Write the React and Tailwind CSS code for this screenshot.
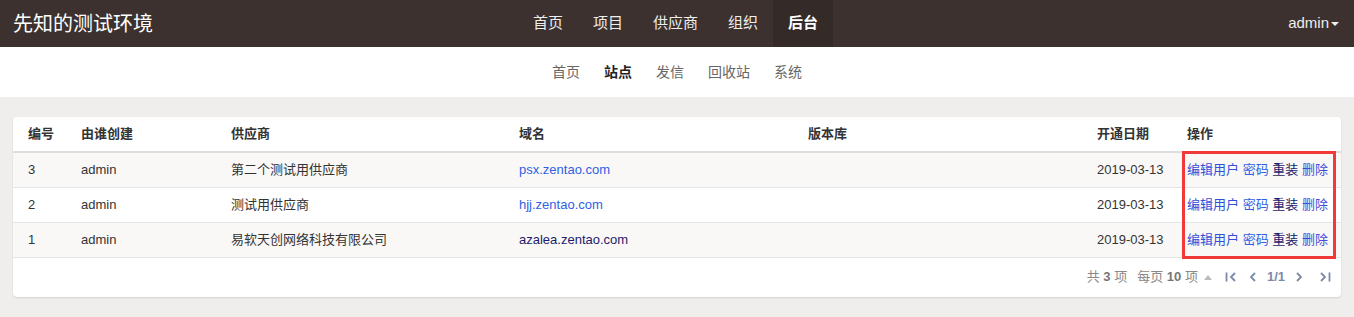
import React from 'react';

const rows = [
  { id: 3, by: 'admin', vendor: '第二个测试用供应商', domain: 'psx.zentao.com', domainColor: 'text-[#2f5fe3]', date: '2019-03-13', odd: true },
  { id: 2, by: 'admin', vendor: '测试用供应商', domain: 'hjj.zentao.com', domainColor: 'text-[#2f5fe3]', date: '2019-03-13', odd: false },
  { id: 1, by: 'admin', vendor: '易软天创网络科技有限公司', domain: 'azalea.zentao.com', domainColor: 'text-[#1d1b6b]', date: '2019-03-13', odd: true },
];

const mainNav = ['首页', '项目', '供应商', '组织', '后台'];
const subNav = ['首页', '站点', '发信', '回收站', '系统'];

export default function App() {
  return (
    <div className="min-h-[317px] bg-[#efeeec] font-['Liberation_Sans','Noto_Sans_CJK_SC',sans-serif] text-[13px] text-[#333]">
      {/* 顶部导航 */}
      <header className="h-[47px] bg-[#3c312e] flex items-center justify-between pl-[13px] pr-[15px] relative">
        <div className="text-[20px] text-white leading-none">先知的测试环境</div>
        <nav className="absolute left-[518px] top-0 h-[47px] flex">
          {mainNav.map((item) => (
            <a
              key={item}
              className={`h-full flex items-center px-[15px] text-[15px] ${item === '后台' ? 'bg-[#342a27] font-bold text-white' : 'text-[#eee]'}`}
            >
              {item}
            </a>
          ))}
        </nav>
        <div className="flex items-center text-[15px] text-[#eee]">
          admin
          <span className="ml-[2px] inline-block w-0 h-0 border-l-[4px] border-r-[4px] border-t-[4px] border-l-transparent border-r-transparent border-t-[#eee]" />
        </div>
      </header>

      {/* 二级导航 */}
      <div className="h-[50px] bg-white flex items-center justify-center">
        <div className="flex">
          {subNav.map((item) => (
            <a key={item} className={`px-[12px] text-[14px] ${item === '站点' ? 'font-bold text-[#222]' : 'text-[#666]'}`}>
              {item}
            </a>
          ))}
        </div>
      </div>

      {/* 列表 */}
      <div className="px-[13px] pt-[20px] pb-[20px]">
        <div className="relative bg-white rounded-[4px] shadow-[0_1px_2px_rgba(0,0,0,0.12)]">
          <table className="w-full table-fixed border-collapse">
            <colgroup>
              <col className="w-[53px]" />
              <col className="w-[150px]" />
              <col className="w-[288px]" />
              <col className="w-[289px]" />
              <col className="w-[289px]" />
              <col className="w-[90px]" />
              <col />
            </colgroup>
            <thead>
              <tr className="h-[35px] border-b-2 border-[#ddd] text-left">
                {['编号', '由谁创建', '供应商', '域名', '版本库', '开通日期', '操作'].map((h) => (
                  <th key={h} className="pl-[15px] font-bold text-[13px] text-[#333]">{h}</th>
                ))}
              </tr>
            </thead>
            <tbody>
              {rows.map((r) => (
                <tr key={r.id} className={`h-[35px] border-b border-[#e5e5e5] ${r.odd ? 'bg-[#f9f8f7]' : 'bg-white'}`}>
                  <td className="pl-[15px]">{r.id}</td>
                  <td className="pl-[15px]">{r.by}</td>
                  <td className="pl-[15px]">{r.vendor}</td>
                  <td className={`pl-[15px] ${r.domainColor}`}>{r.domain}</td>
                  <td className="pl-[15px]"></td>
                  <td className="pl-[15px]">{r.date}</td>
                  <td className="pl-[15px] whitespace-nowrap">
                    <a className="text-[#3050d8]">编辑用户</a>{' '}
                    <a className="text-[#2f5fe3]">密码</a>{' '}
                    <a className="text-[#1d1b6b]">重装</a>{' '}
                    <a className="text-[#4a4ad8]">删除</a>
                  </td>
                </tr>
              ))}
            </tbody>
          </table>

          {/* 分页 */}
          <div className="h-[39px] flex items-center justify-end pr-[10px] text-[13px] text-[#888]">
            <span>共 <b className="text-[#777]">3</b> 项</span>
            <span className="ml-[10px]">每页 <b className="text-[#777]">10</b> 项</span>
            <span className="ml-[6px] inline-block w-0 h-0 border-l-[4px] border-r-[4px] border-b-[5px] border-l-transparent border-r-transparent border-b-[#bbb]" />
            <svg className="ml-[13px]" width="12" height="12" viewBox="0 0 12 12" fill="none" stroke="#7a8aa8" strokeWidth="1.8">
              <path d="M1.5 1.5v9" />
              <path d="M10 2L6 6l4 4" />
            </svg>
            <svg className="ml-[12px]" width="8" height="12" viewBox="0 0 8 12" fill="none" stroke="#7a8aa8" strokeWidth="1.8">
              <path d="M6 2L2 6l4 4" />
            </svg>
            <b className="ml-[10px] text-[#7a8aa8]">1/1</b>
            <svg className="ml-[10px]" width="8" height="12" viewBox="0 0 8 12" fill="none" stroke="#7a8aa8" strokeWidth="1.8">
              <path d="M2 2l4 4-4 4" />
            </svg>
            <svg className="ml-[16px]" width="12" height="12" viewBox="0 0 12 12" fill="none" stroke="#7a8aa8" strokeWidth="1.8">
              <path d="M2 2l4 4-4 4" />
              <path d="M10.5 1.5v9" />
            </svg>
          </div>

          {/* 红色标注框 */}
          <div className="absolute left-[1169px] top-[34px] w-[154px] h-[108px] border-[3px] border-[#f03a3a] pointer-events-none" />
        </div>
      </div>
    </div>
  );
}
